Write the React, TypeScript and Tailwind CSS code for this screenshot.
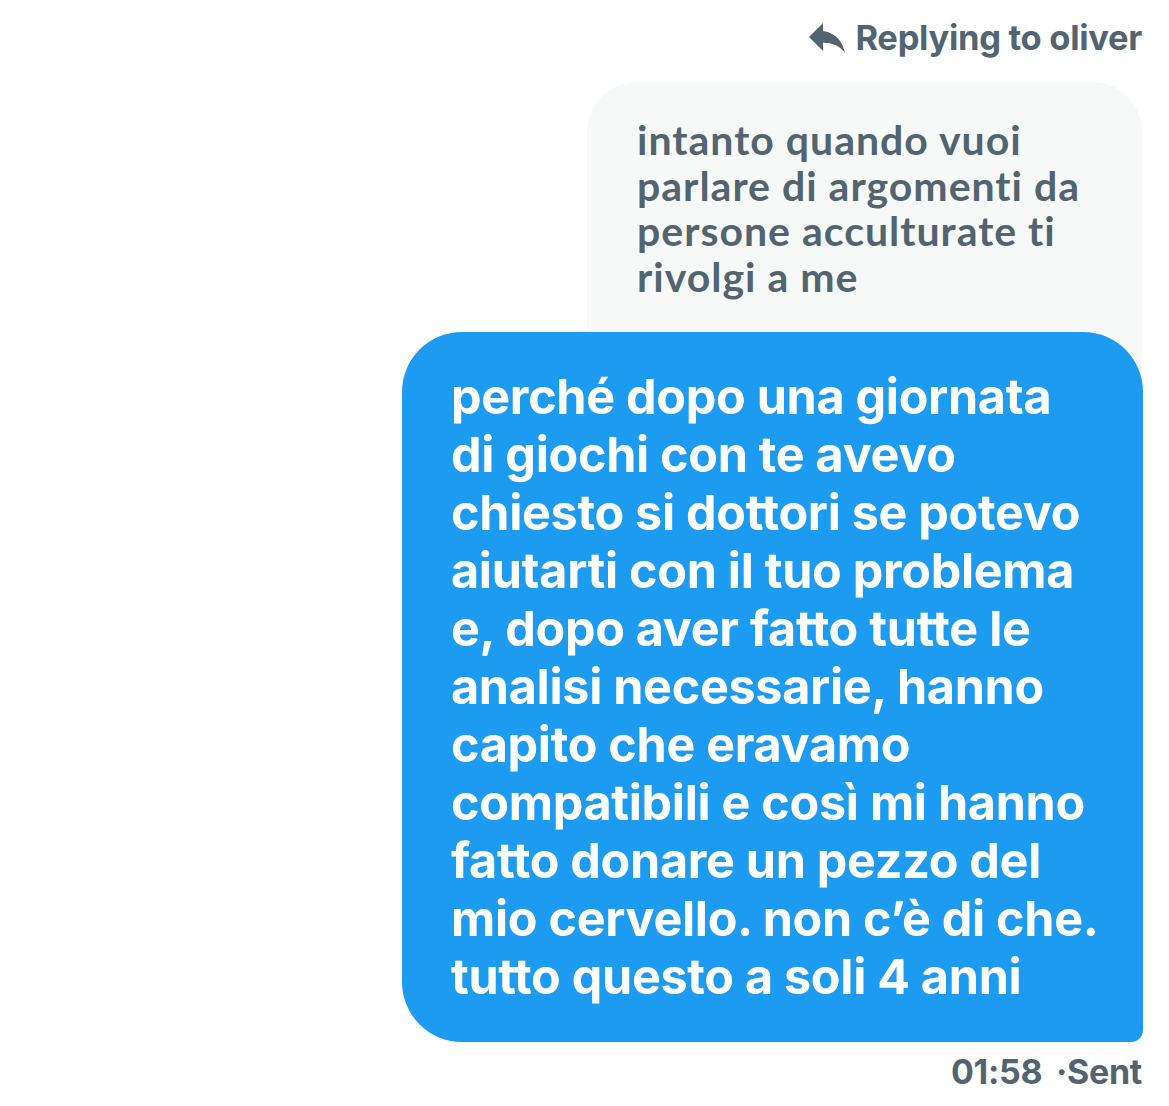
import React from "react";

const grey = "#536471";

function ReplyIcon() {
  return (
    <svg viewBox="3 4 19 17" className="w-[38px] h-[34px]" fill={grey}>
      <path d="M10 9V5l-7 7 7 7v-4.1c5 0 8.5 1.6 11 5.1-1-5-4-10-11-11z" />
    </svg>
  );
}

export default function App() {
  return (
    <div className="min-h-[1106px] w-full bg-white pr-[26px] pt-[18px] flex flex-col items-end font-['Inter',sans-serif]">
      <div className="mr-[1px] flex items-center gap-[8px] text-[34.5px] font-bold leading-[40px] text-[#536471] tracking-[-0.3px]">
        <ReplyIcon />
        <span>Replying to oliver</span>
      </div>

      <div className="mt-[24px] mr-[1px] w-[555px] rounded-t-[50px] rounded-b-[20px] bg-[#f7f9f9] pl-[50px] pr-[30px] pt-[35px] pb-[90px]">
        <p className="font-['Lato',sans-serif] text-[41px] font-bold leading-[45.5px] tracking-[1px] text-[#536471]">
          intanto quando vuoi
          <br />
          parlare di argomenti da
          <br />
          persone acculturate ti
          <br />
          rivolgi a me
        </p>
      </div>

      <div className="relative -mt-[57px] w-[741px] rounded-[60px] rounded-br-[12px] bg-[#1d9bf0] pl-[49px] pr-[20px] pt-[36px] pb-[36px]">
        <p className="text-[48.5px] font-bold leading-[58px] text-white tracking-[-0.3px] whitespace-nowrap">
          perché dopo una giornata
          <br />
          di giochi con te avevo
          <br />
          chiesto si dottori se potevo
          <br />
          aiutarti con il tuo problema
          <br />
          e, dopo aver fatto tutte le
          <br />
          analisi necessarie, hanno
          <br />
          capito che eravamo
          <br />
          compatibili e così mi hanno
          <br />
          fatto donare un pezzo del
          <br />
          mio cervello. non c’è di che.
          <br />
          tutto questo a soli 4 anni
        </p>
      </div>

      <div className="mt-[12px] mr-[1px] text-[34px] font-bold leading-[36px] text-[#536471] tracking-[-0.3px]">
        01:58 <span className="ml-[6px]">·</span>Sent
      </div>
    </div>
  );
}
